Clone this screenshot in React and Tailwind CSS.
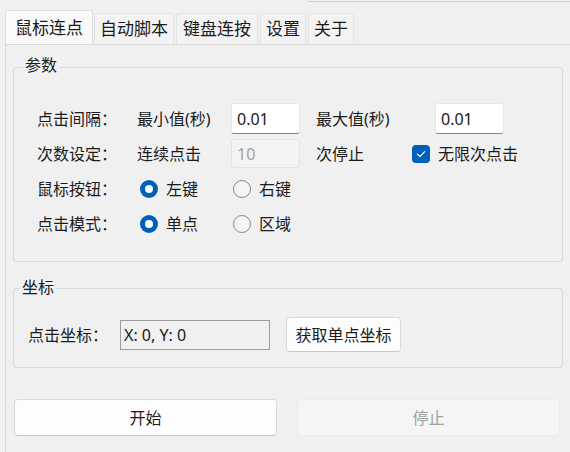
import React from 'react';

const FONT = { fontFamily: '"Noto Sans", "Noto Sans CJK SC", sans-serif' };

function Tab({ label, selected, className = '' }) {
  if (selected) {
    return (
      <div className={`h-[34px] flex items-center justify-center bg-[#f9f9f9] border border-b-0 border-[#dcdcdc] rounded-t-[3px] text-[17px] text-[#1b1b1b] ${className}`}>
        {label}
      </div>
    );
  }
  return (
    <div className={`h-[31px] flex items-center justify-center bg-[#f3f3f3] border border-b-0 border-[#e4e4e4] rounded-t-[3px] text-[17px] text-[#1b1b1b] ${className}`}>
      {label}
    </div>
  );
}

function Radio({ checked, label }) {
  return (
    <div className="flex items-center gap-2">
      {checked ? (
        <span className="w-[18px] h-[18px] rounded-full bg-[#005fb8] flex items-center justify-center">
          <span className="w-[8px] h-[8px] rounded-full bg-white" />
        </span>
      ) : (
        <span className="w-[18px] h-[18px] rounded-full border border-[#8a8a8a] bg-[#f5f5f5]" />
      )}
      <span>{label}</span>
    </div>
  );
}

function Checkbox({ checked, label }) {
  return (
    <div className="flex items-center gap-2">
      <span className="w-[18px] h-[18px] rounded-[4px] bg-[#005fb8] flex items-center justify-center">
        {checked && (
          <svg width="12" height="12" viewBox="0 0 12 12" fill="none">
            <path d="M2.5 6.2 L5 8.6 L9.6 3.6" stroke="white" strokeWidth="1.2" strokeLinecap="round" strokeLinejoin="round" />
          </svg>
        )}
      </span>
      <span>{label}</span>
    </div>
  );
}

function TextInput({ value, disabled }) {
  if (disabled) {
    return (
      <div className="w-[69px] h-[29px] flex items-center px-[5px] bg-[#f3f3f3] border border-[#e3e3e3] rounded-[3px] text-[#a3a3a3]">
        {value}
      </div>
    );
  }
  return (
    <div className="w-[69px] h-[31px] flex items-center px-[5px] bg-white border border-[#e6e6e6] border-b-[#868686] rounded-[3px] text-[#1b1b1b]">
      {value}
    </div>
  );
}

export default function App() {
  return (
    <div style={FONT} className="w-[570px] h-[452px] bg-[#f0f0f0] overflow-hidden flex flex-col text-[16px] text-[#1b1b1b]">
      {/* window frame line */}
      <div className="h-[10px] flex items-start pt-[1px]">
        <div className="w-[308px]" />
        <div className="flex-1 h-px bg-[#cfcfcf]" />
      </div>

      {/* tabs */}
      <div className="h-[34px] flex items-end">
        <Tab label="鼠标连点" selected className="ml-[5px] w-[88px]" />
        <Tab label="自动脚本" className="ml-[1px] w-[80px]" />
        <Tab label="键盘连按" className="ml-[2px] w-[82px]" />
        <Tab label="设置" className="ml-[2px] w-[46px]" />
        <Tab label="关于" className="ml-[2px] w-[46px]" />
      </div>

      {/* pane */}
      <div className="flex-1 ml-[5px] border-l border-t border-[#dadada] pl-[7px] pt-[11px]">
        <fieldset className="w-[550px] border border-[#d9d9d9] rounded-[3px] pb-[20px]">
          <legend className="ml-[9px] px-[2px] leading-[22px] -translate-y-[2px]">参数</legend>
          <div className="pt-[23px] pl-[23px] flex flex-col">
            <div className="h-[35px] flex items-center">
              <span className="w-[100px]">点击间隔：</span>
              <span className="w-[94px]">最小值(秒)</span>
              <TextInput value="0.01" />
              <span className="ml-[16px] w-[119px]">最大值(秒)</span>
              <TextInput value="0.01" />
            </div>
            <div className="h-[35px] flex items-center">
              <span className="w-[100px]">次数设定：</span>
              <span className="w-[94px]">连续点击</span>
              <TextInput value="10" disabled />
              <span className="ml-[16px] w-[96px]">次停止</span>
              <Checkbox checked label="无限次点击" />
            </div>
            <div className="h-[35px] flex items-center">
              <span className="w-[103px]">鼠标按钮：</span>
              <div className="w-[93px]"><Radio checked label="左键" /></div>
              <Radio label="右键" />
            </div>
            <div className="h-[35px] flex items-center">
              <span className="w-[103px]">点击模式：</span>
              <div className="w-[93px]"><Radio checked label="单点" /></div>
              <Radio label="区域" />
            </div>
          </div>
        </fieldset>

        <fieldset className="mt-[15px] w-[550px] border border-[#d9d9d9] rounded-[3px] pb-[15px]">
          <legend className="ml-[6px] px-[2px] leading-[22px] -translate-y-[1px]">坐标</legend>
          <div className="pt-[18px] pl-[14px] h-[53px] flex items-center">
            <span className="w-[92px]">点击坐标：</span>
            <div className="w-[150px] h-[30px] flex items-center px-[3px] border border-[#9b9b9b] bg-[#f0f0f0]">
              X: 0, Y: 0
            </div>
            <button className="ml-[16px] w-[115px] h-[35px] flex items-center justify-center bg-[#fdfdfd] border border-[#dadada] border-b-[#c8c8c8] rounded-[4px]">
              获取单点坐标
            </button>
          </div>
        </fieldset>

        <div className="mt-[31px] ml-[1px] flex gap-[20px]">
          <button className="w-[263px] h-[37px] flex items-center justify-center bg-[#fdfdfd] border border-[#dadada] border-b-[#c4c4c4] rounded-[4px] text-[#1b1b1b]">
            开始
          </button>
          <button className="w-[263px] h-[37px] flex items-center justify-center bg-[#f5f5f5] border border-[#ebebeb] rounded-[4px] text-[#a0a0a0]">
            停止
          </button>
        </div>
      </div>
    </div>
  );
}
